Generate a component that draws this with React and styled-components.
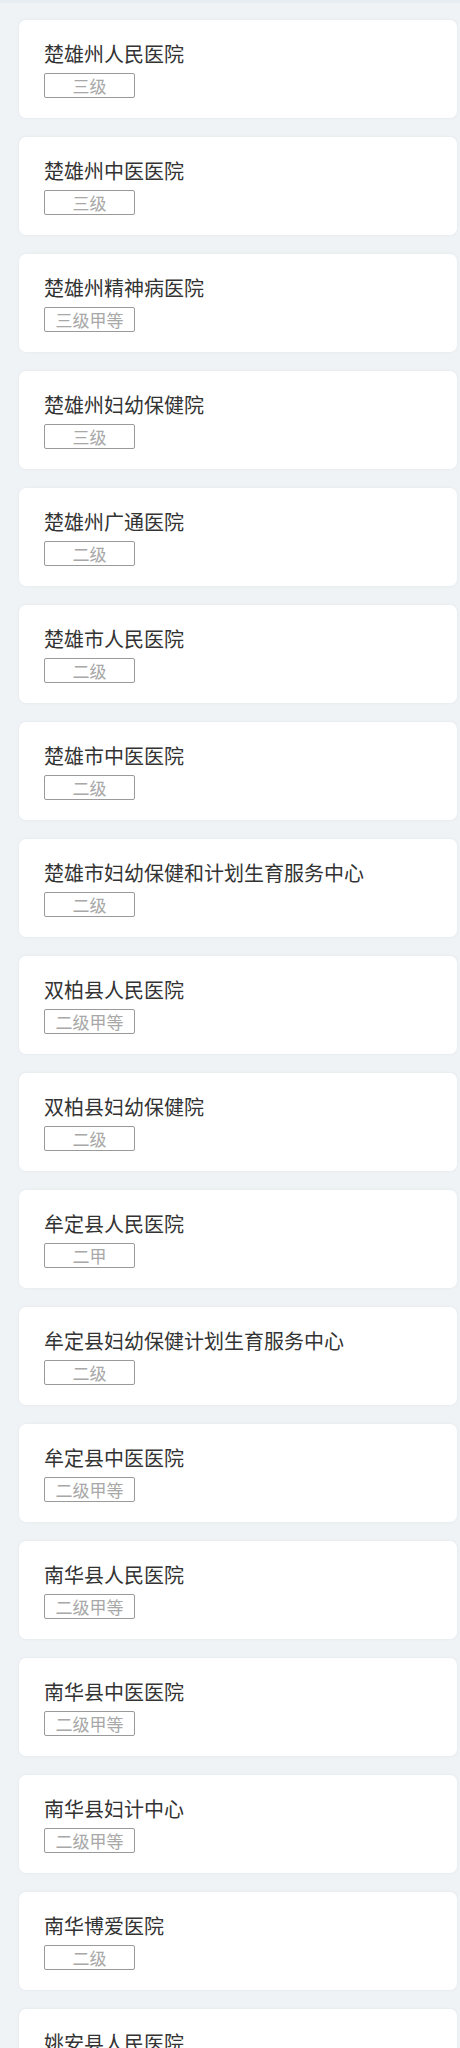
import React from "react";
import styled, { createGlobalStyle } from "styled-components";

const hospitals = [
  { name: "楚雄州人民医院", level: "三级" },
  { name: "楚雄州中医医院", level: "三级" },
  { name: "楚雄州精神病医院", level: "三级甲等" },
  { name: "楚雄州妇幼保健院", level: "三级" },
  { name: "楚雄州广通医院", level: "二级" },
  { name: "楚雄市人民医院", level: "二级" },
  { name: "楚雄市中医医院", level: "二级" },
  { name: "楚雄市妇幼保健和计划生育服务中心", level: "二级" },
  { name: "双柏县人民医院", level: "二级甲等" },
  { name: "双柏县妇幼保健院", level: "二级" },
  { name: "牟定县人民医院", level: "二甲" },
  { name: "牟定县妇幼保健计划生育服务中心", level: "二级" },
  { name: "牟定县中医医院", level: "二级甲等" },
  { name: "南华县人民医院", level: "二级甲等" },
  { name: "南华县中医医院", level: "二级甲等" },
  { name: "南华县妇计中心", level: "二级甲等" },
  { name: "南华博爱医院", level: "二级" },
  { name: "姚安县人民医院", level: "二级" },
];

const GlobalStyle = createGlobalStyle`
  body {
    margin: 0;
    background: #eff3f6;
    font-family: "Noto Sans CJK SC", "Noto Sans", sans-serif;
  }
`;

const Page = styled.div`
  border-top: 3px solid #e7edf1;
  padding: 17px 3px 0 19px;
  display: flex;
  flex-direction: column;
  gap: 19px;
`;

const Card = styled.div`
  background: #fff;
  border-radius: 7px;
  box-shadow: 0 0 3px rgba(120, 140, 160, 0.12);
  padding: 21px 25px 20px 25px;
  height: 98px;
  box-sizing: border-box;
`;

const Name = styled.div`
  font-size: 20px;
  line-height: 26px;
  color: #333;
  white-space: nowrap;
`;

const Level = styled.div`
  margin-top: 6px;
  width: 91px;
  height: 25px;
  box-sizing: border-box;
  border: 1px solid #9a9a9a;
  border-radius: 2px;
  color: #a8a8a8;
  font-size: 17px;
  line-height: 23px;
  text-align: center;
`;

export default function App() {
  return (
    <>
      <GlobalStyle />
      <Page>
        {hospitals.map((h) => (
          <Card key={h.name}>
            <Name>{h.name}</Name>
            <Level>{h.level}</Level>
          </Card>
        ))}
      </Page>
    </>
  );
}
